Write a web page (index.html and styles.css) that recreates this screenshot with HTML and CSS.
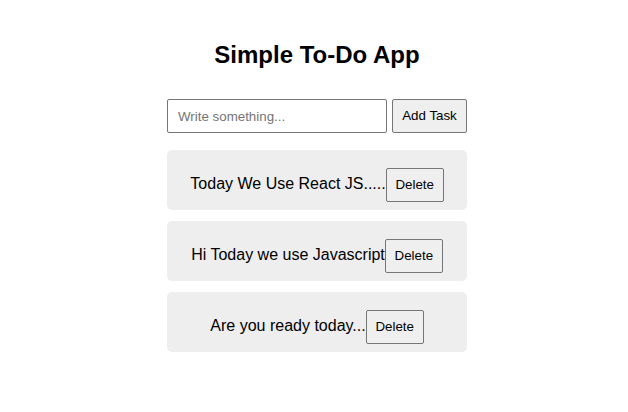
FILE: index.html
```html
<!DOCTYPE html>
<html lang="en">
<head>
<meta charset="utf-8">
<title>Simple To-Do App</title>
<link rel="stylesheet" href="styles.css">
</head>
<body>
<div class="page">
  <div class="app">
    <h1 class="title">Simple To-Do App</h1>
    <div class="form">
      <input class="task-input" type="text" placeholder="Write something...">
      <button class="btn add-btn">Add Task</button>
    </div>
    <ul class="list">
      <li class="item"><span class="item-text">Today We Use React JS.....</span><button class="btn del-btn">Delete</button></li>
      <li class="item"><span class="item-text">Hi Today we use Javascript</span><button class="btn del-btn">Delete</button></li>
      <li class="item"><span class="item-text">Are you ready today...</span><button class="btn del-btn">Delete</button></li>
    </ul>
  </div>
</div>
</body>
</html>
```

FILE: styles.css
```css
html, body {
  margin: 0;
  padding: 0;
  background: #ffffff;
}
body {
  font-family: "Liberation Sans", Arial, sans-serif;
  color: #000;
}
.page {
  display: flex;
  justify-content: center;
  padding: 41px 0 0 6px;
}
.app {
  width: 300px;
}
.title {
  margin: 0 0 30px;
  font-size: 24px;
  font-weight: bold;
  line-height: 28px;
  text-align: center;
}
.form {
  display: flex;
  gap: 5px;
  margin-bottom: 17px;
}
.task-input {
  box-sizing: border-box;
  width: 220px;
  height: 34px;
  padding: 0 10px;
  border: 1px solid #767676;
  border-radius: 2px;
  font-family: "Liberation Sans", Arial, sans-serif;
  font-size: 13.333px;
  color: #000;
  background: #fff;
  outline: none;
}
.task-input::placeholder {
  color: #757575;
}
.btn {
  box-sizing: border-box;
  height: 34px;
  padding: 0 8px;
  border: 1px solid #767676;
  border-radius: 2px;
  background: #efefef;
  color: #000;
  font-family: "Liberation Sans", Arial, sans-serif;
  font-size: 13.333px;
  line-height: 32px;
}
.add-btn {
  width: 75px;
}
.list {
  list-style: none;
  margin: 0;
  padding: 0;
  display: flex;
  flex-direction: column;
  gap: 11px;
}
.item {
  box-sizing: border-box;
  height: 60px;
  padding: 18px 8px 8px;
  background: #eeeeee;
  border-radius: 5px;
  text-align: center;
  font-size: 16px;
}
.del-btn {
  width: 58px;
  vertical-align: baseline;
}
```
